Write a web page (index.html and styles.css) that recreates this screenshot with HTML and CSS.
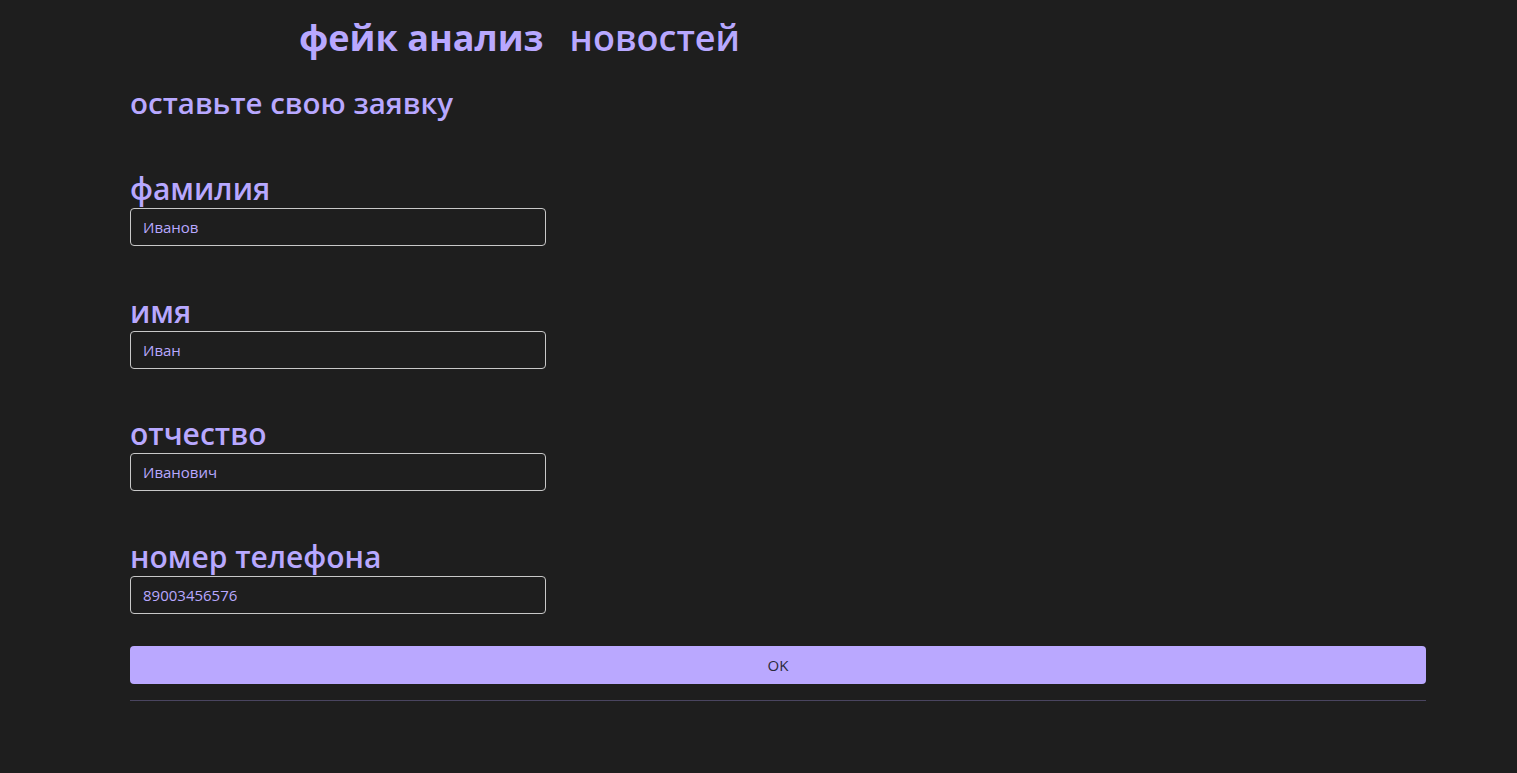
FILE: index.html
```html
<!DOCTYPE html>
<html lang="ru">
<head>
<meta charset="utf-8">
<title>фейк анализ новостей</title>
<link rel="stylesheet" href="styles.css">
</head>
<body>
<header class="top">
  <span class="brand">фейк анализ</span>
  <span class="brand-sub">новостей</span>
</header>
<main class="page">
  <h2 class="form-title">оставьте свою заявку</h2>
  <form class="form">
    <div class="field">
      <label class="field-label">фамилия</label>
      <input class="field-input" type="text" value="Иванов">
    </div>
    <div class="field">
      <label class="field-label">имя</label>
      <input class="field-input" type="text" value="Иван">
    </div>
    <div class="field">
      <label class="field-label">отчество</label>
      <input class="field-input" type="text" value="Иванович">
    </div>
    <div class="field">
      <label class="field-label">номер телефона</label>
      <input class="field-input" type="text" value="89003456576">
    </div>
    <button class="submit" type="button">OK</button>
  </form>
  <hr class="divider">
</main>
</body>
</html>
```

FILE: styles.css
```css
* { box-sizing: border-box; }
html, body {
  margin: 0;
  background: #1e1e1e;
}
body {
  font-family: "Open Sans", "Noto Sans", sans-serif;
  color: #b8a8ff;
  min-height: 773px;
}
.top {
  display: flex;
  align-items: baseline;
  gap: 26px;
  padding: 13px 0 0 299px;
  height: 83px;
  font-size: 36px;
  line-height: 50px;
}
.brand { font-weight: 700; }
.brand-sub { font-weight: 600; font-size: 36px; }
.page {
  margin-left: 130px;
  width: 1296px;
}
.form-title {
  margin: 0;
  font-size: 29.5px;
  font-weight: 600;
  line-height: 40px;
  height: 87px;
}
.form {
  display: flex;
  flex-direction: column;
}
.field {
  display: flex;
  flex-direction: column;
}
.field + .field { margin-top: 46.67px; }
.field-label {
  font-size: 30px;
  font-weight: 600;
  line-height: 38px;
  height: 38px;
}
.field-input {
  width: 416px;
  height: 38px;
  flex: none;
  background: transparent;
  border: 1px solid #c8c8c8;
  border-radius: 4px;
  padding: 0 12px;
  font-family: "Open Sans", "Noto Sans", sans-serif;
  font-size: 15px;
  color: #b8a8ff;
  outline: none;
}
.submit {
  margin-top: 32px;
  width: 1296px;
  height: 38px;
  border: none;
  border-radius: 4px;
  background: #baa8ff;
  color: #2a2a3a;
  font-family: "Open Sans", "Noto Sans", sans-serif;
  font-size: 15px;
}
.divider {
  margin: 16px 0 0;
  border: none;
  border-top: 1px solid #4a4560;
}
```
